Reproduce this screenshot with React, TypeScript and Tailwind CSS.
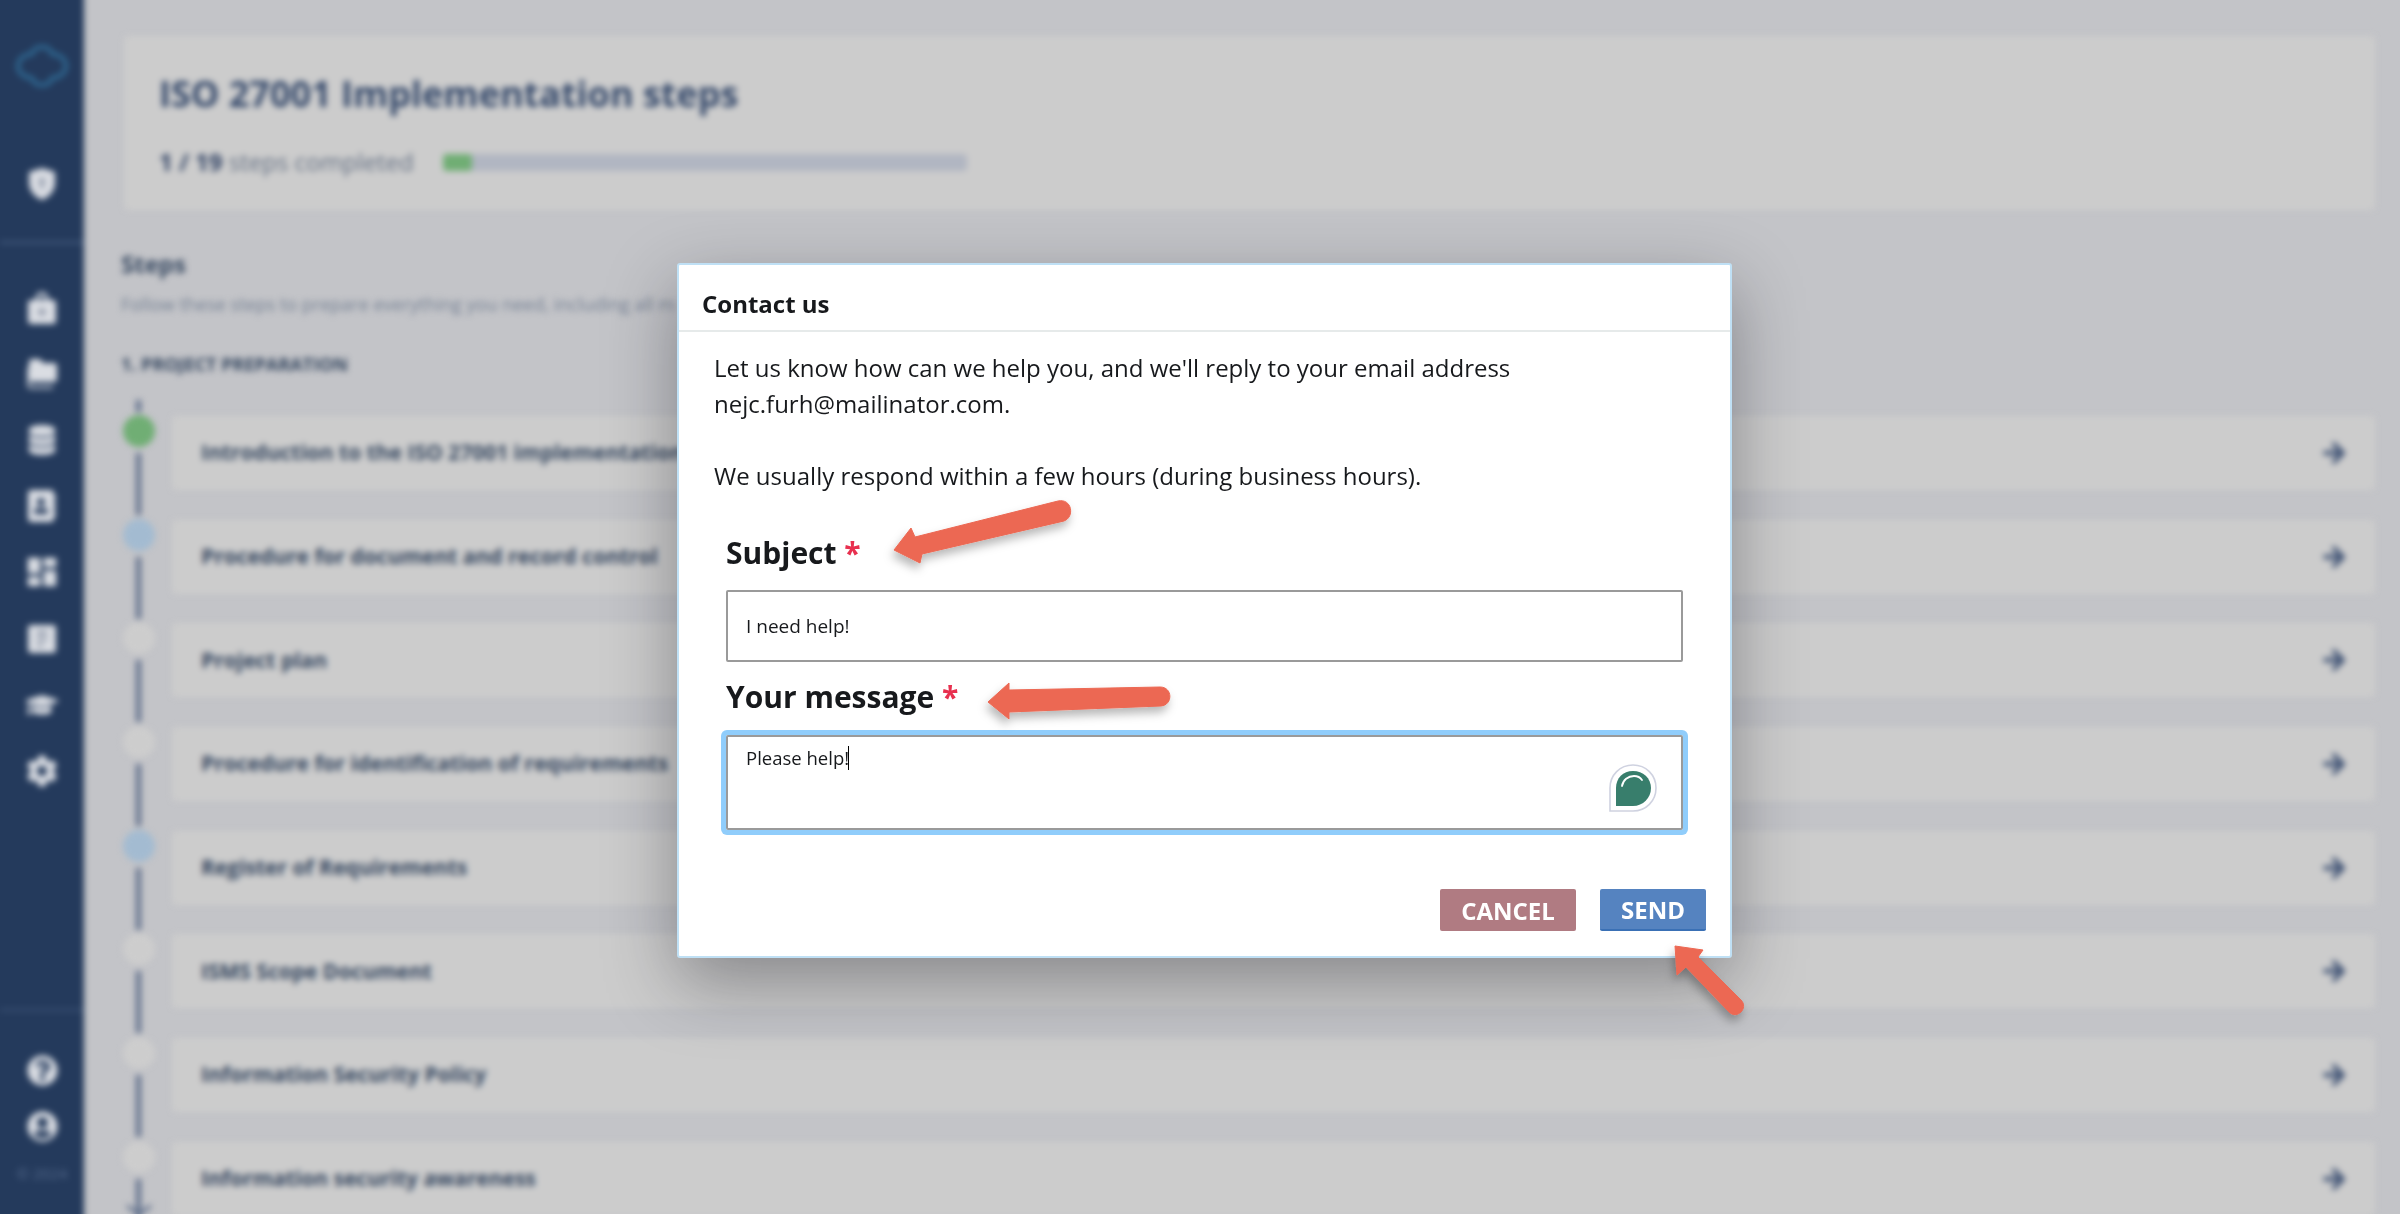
import React from "react";
import { ArrowRight } from "lucide-react";
import { FaDatabase, FaAddressBook, FaGraduationCap, FaCog, FaQuestionCircle, FaUserCircle } from "react-icons/fa";
import { MdDashboard } from "react-icons/md";

const steps = [
  { t: "Introduction to the ISO 27001 implementation", c: "bg-[#70ae74]" },
  { t: "Procedure for document and record control", c: "bg-[#a3bbd1]" },
  { t: "Project plan", c: "bg-[#cdcdcd]" },
  { t: "Procedure for identification of requirements", c: "bg-[#cdcdcd]" },
  { t: "Register of Requirements", c: "bg-[#a3bbd1]" },
  { t: "ISMS Scope Document", c: "bg-[#cdcdcd]" },
  { t: "Information Security Policy", c: "bg-[#cdcdcd]" },
  { t: "Information security awareness", c: "bg-[#cdcdcd]" },
];

const navIcons = [
  <svg width="28" height="32" viewBox="0 0 28 32" key="bag">
    <path d="M8 8V5c0-3 3-5 6-5s6 2 6 5v3h-3V5c0-1-1-2-3-2s-3 1-3 2v3z" fill="currentColor" />
    <path d="M3 8h22c2 0 3 1 3 3v18c0 2-1 3-3 3H3c-2 0-3-1-3-3V11c0-2 1-3 3-3z" fill="currentColor" />
    <circle cx="14" cy="20" r="3.5" fill="#8e97a8" />
  </svg>,
  <svg width="30" height="30" viewBox="0 0 30 30" key="folder">
    <path d="M5 0h8l3 4h11c2 0 3 1 3 3v13c0 2-1 3-3 3H5c-2 0-3-1-3-3V3c0-2 1-3 3-3z" fill="currentColor" />
    <path d="M0 8v18c0 2 1 4 4 4h22v-3H4c-1 0-1-1-1-1V8z" fill="currentColor" opacity="0.75" />
  </svg>,
  <FaDatabase size={30} key="db" />,
  <FaAddressBook size={32} key="id" />,
  <MdDashboard size={38} key="dash" />,
  <svg width="28" height="30" viewBox="0 0 28 30" key="note">
    <path d="M3 2h22c2 0 3 1 3 3v22c0 2-1 3-3 3H3c-2 0-3-1-3-3V5c0-2 1-3 3-3z" fill="currentColor" />
    <path d="M9 8h10v4H9zM9 15h10v3H9zM9 21h6v3H9z" fill="#8e97a8" />
  </svg>,
  <FaGraduationCap size={32} key="cap" />,
  <FaCog size={32} key="cog" />,
];

function Sidebar() {
  return (
    <aside className="w-[94px] shrink-0 pl-[10px] bg-[#243a5c] flex flex-col text-[#dadde3]">
      <div className="flex flex-col items-center pt-[55px] h-[254px] border-b-[3px] border-[#3e5578]">
        <svg width="52" height="42" viewBox="0 0 52 42" fill="none" stroke="#2f6a94" strokeWidth="4">
          <path d="M26 2c6 0 9 3 10 7 7 0 14 5 14 12s-7 12-14 12c-1 4-4 7-10 7s-9-3-10-7C9 33 2 28 2 21S9 9 16 9c1-4 4-7 10-7z" />
        </svg>
        <svg className="mt-[81px]" width="26" height="32" viewBox="0 0 26 32">
          <path d="M13 0l13 4v11c0 8-6 14-13 17C6 29 0 23 0 15V4z" fill="currentColor" />
          <circle cx="13" cy="13" r="3" fill="#8e97a8" />
          <rect x="11.5" y="14" width="3" height="7" fill="#8e97a8" />
        </svg>
      </div>
      <div className="flex flex-col items-center pt-[48px] gap-[34.1px]">
        {navIcons.map((icon, i) => (
          <div key={i} className="h-[32px] flex items-center justify-center">
            {icon}
          </div>
        ))}
      </div>
      <div className="mt-auto h-[215px] border-t-[2px] border-[#3e5578] flex flex-col items-center pt-[44px]">
        <FaQuestionCircle size={31} />
        <FaUserCircle className="mt-[25px]" size={31} />
        <div className="mt-[21px] text-[15px] leading-5 text-[#566c8e] font-['Open_Sans',sans-serif]">© 2024</div>
      </div>
    </aside>
  );
}

function Main() {
  return (
    <main className="flex-1 min-w-0 pt-[46px] pl-[37px] pr-[25px] font-['Open_Sans',sans-serif]">
      <section className="ml-[3px] h-[174px] rounded bg-[#cccccc] pl-[35px] pt-[33px]">
        <h1 className="text-[36px] leading-[50px] font-bold text-[#34486a]">ISO 27001 Implementation steps</h1>
        <div className="mt-[29px] flex items-center h-[28px]">
          <span className="text-[24px] text-[#626e82] w-[284px] whitespace-nowrap">
            <b className="text-[#2f4163]">1 / 19</b> steps completed
          </span>
          <div className="w-[524px] h-[17px] rounded bg-[#b1b6c2]">
            <div className="w-[29px] h-full rounded bg-[#70ae74]" />
          </div>
        </div>
      </section>
      <h2 className="mt-[38px] text-[24px] leading-8 font-bold text-[#34465f]">Steps</h2>
      <p className="mt-[12px] text-[18px] leading-6 text-[#737f92] whitespace-nowrap">
        Follow these steps to prepare everything you need, including all m
      </p>
      <h3 className="mt-[36px] text-[18px] leading-6 font-bold uppercase text-[#34465f]">1. Project preparation</h3>
      <div className="mt-[40px] flex flex-col gap-[29.7px]">
        {steps.map((s, i) => (
          <div key={i} className="flex">
            <div className="w-[51px] shrink-0 relative">
              {i === 0 && <div className="absolute top-[-16px] left-[15px] w-[5px] h-[12px] bg-[#5f6f8b]" />}
              <div className={`absolute top-[-1px] left-[2px] w-[32px] h-[32px] rounded-full ${s.c}`} />
              <div className="absolute top-[37px] left-[15px] w-[5px] h-[62px] bg-[#5f6f8b]" />
              {i === 7 && (
                <svg className="absolute top-[62px] left-[6px]" width="24" height="12" viewBox="0 0 24 12" fill="#5f6f8b">
                  <path d="M0 0l12 8L24 0v4L12 12 0 4z" />
                </svg>
              )}
            </div>
            <div className="flex-1 h-[74px] rounded bg-[#cccccc] flex items-center justify-between pl-[29px] pr-[26px]">
              <span className="text-[21px] font-bold text-[#34465f]">{s.t}</span>
              <ArrowRight size={30} strokeWidth={3.5} className="text-[#3f5274]" />
            </div>
          </div>
        ))}
      </div>
    </main>
  );
}

function Dialog() {
  return (
    <div className="absolute left-[677px] top-[263px] w-[1055px] h-[695px] rounded-[3px] bg-white border-2 border-[#bfe0f5] shadow-[0_24px_70px_rgba(20,22,30,0.38)] font-['Open_Sans',sans-serif] text-[#17191c] flex flex-col">
      <div className="h-[67px] shrink-0 border-b-2 border-[#e6eaea] pl-[23px] pt-[21px] text-[24px] leading-9 font-bold">Contact us</div>
      <div className="pl-[35px] pt-[18px] text-[24px] leading-[36px]">
        <p>Let us know how can we help you, and we'll reply to your email address</p>
        <p>nejc.furh@mailinator.com.</p>
        <p className="mt-[36px]">We usually respond within a few hours (during business hours).</p>
      </div>
      <div className="mx-[47px] mt-[38px] flex flex-col">
        <label className="text-[30px] leading-[42px] font-bold">
          Subject <span className="text-[#e8304f]">*</span>
        </label>
        <div className="mt-[16px] h-[72px] rounded-[2px] border-2 border-[#9a9a9a] pl-[18px] flex items-center text-[19px]">I need help!</div>
        <label className="mt-[14px] text-[30px] leading-[42px] font-bold">
          Your message <span className="text-[#e8304f]">*</span>
        </label>
        <div className="relative mt-[17px] h-[95px] rounded-[2px] border-2 border-[#9a9a9a] ring-[5px] ring-[#90cdfb] pl-[18px] pt-[9px] text-[18.5px] leading-[24px] flex items-start">
          <span>Please help!</span>
          <span className="-ml-[1px] w-[1px] h-[24px] bg-black" />
          <svg className="absolute right-[24px] top-[27px]" width="48" height="48" viewBox="0 0 48 48">
            <path d="M1 47V24C1 11 11 1 24 1s23 10 23 23-10 23-23 23H1z" fill="#fff" stroke="#cfd2e0" strokeWidth="1.6" />
            <path d="M7 42V24C7 14 14 7 24 7s18 7 18 17-8 18-18 18H7z" fill="#387e6c" />
            <path d="M13 22c1-6 6-10 12-10 3 0 6 1 8 4" fill="none" stroke="#fff" strokeWidth="1.8" strokeLinecap="round" />
          </svg>
        </div>
      </div>
      <div className="mt-auto mb-[25px] mr-[24px] flex justify-end gap-[24px]">
        <button className="w-[136px] h-[42px] pt-[2px] rounded-[2px] bg-[#b07b82] text-white text-[24px] font-bold">CANCEL</button>
        <button className="w-[106px] h-[42px] pt-[2px] rounded-[2px] bg-[#5583c0] border-b-2 border-[#3a70b5] text-white text-[24px] font-bold">SEND</button>
      </div>
    </div>
  );
}

function Annotations() {
  return (
    <svg className="absolute inset-0 pointer-events-none" width="2400" height="1214" viewBox="0 0 2400 1214" fill="#ec6853" stroke="#ec6853" strokeLinejoin="round">
      <defs>
        <filter id="s" x="-30%" y="-30%" width="160%" height="160%">
          <feDropShadow dx="-2" dy="6" stdDeviation="5" floodColor="#000" floodOpacity="0.28" />
        </filter>
      </defs>
      <g filter="url(#s)">
        <path d="M894 550L911 528L915 537L1058 501C1072 498 1075 517 1064 521L922 554L920 563Z" strokeWidth="1" />
        <path d="M988 702L1009 683L1009 690L1160 687C1173 687 1173 705 1161 706L1009 712L1009 719Z" strokeWidth="1" />
        <path d="M1675 946L1703 950L1698 957L1741 1000C1749 1008 1737 1020 1729 1012L1686 967L1677 975Z" strokeWidth="1" />
      </g>
    </svg>
  );
}

export default function App() {
  return (
    <div className="relative w-[2400px] h-[1214px] overflow-hidden bg-[#c3c4c8]">
      <div className="flex h-[1234px] w-[2410px] -ml-[10px] -mt-[10px] blur-[3px]">
        <Sidebar />
        <Main />
      </div>
      <Dialog />
      <Annotations />
    </div>
  );
}
